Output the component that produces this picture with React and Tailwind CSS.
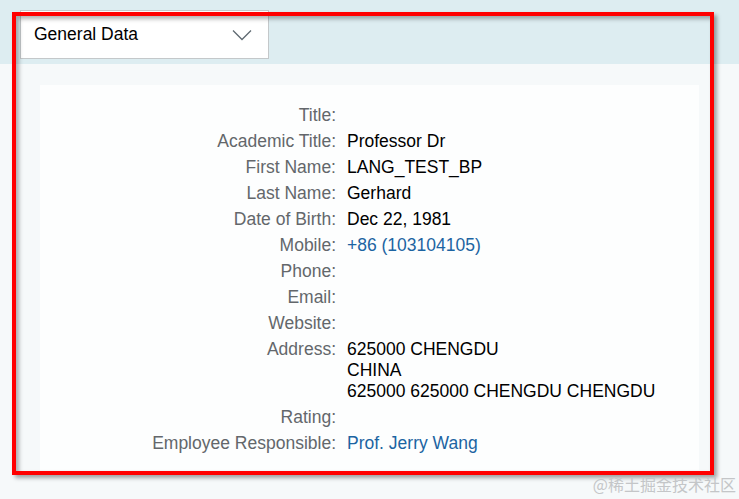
import React from "react";

const rows = [
  { label: "Title:", value: [] },
  { label: "Academic Title:", value: ["Professor Dr"] },
  { label: "First Name:", value: ["LANG_TEST_BP"] },
  { label: "Last Name:", value: ["Gerhard"] },
  { label: "Date of Birth:", value: ["Dec 22, 1981"] },
  { label: "Mobile:", value: ["+86 (103104105)"], link: true },
  { label: "Phone:", value: [] },
  { label: "Email:", value: [] },
  { label: "Website:", value: [] },
  {
    label: "Address:",
    value: ["625000 CHENGDU", "CHINA", "625000 625000 CHENGDU CHENGDU"],
  },
  { label: "Rating:", value: [] },
  { label: "Employee Responsible:", value: ["Prof. Jerry Wang"], link: true },
];

const App = () => {
  return (
    <div className="relative w-[739px] h-[499px] overflow-hidden bg-[#f6f9fa] font-['Liberation_Sans',Arial,sans-serif]">
      {/* header band with the section select */}
      <div className="h-[64px] bg-[#ddedf1] pl-[20px] pt-[10px]">
        <div className="w-[249px] h-[49px] bg-white border border-[#c4c8ca] flex items-center justify-between pl-[13px] pr-[16px]">
          <span className="text-[17.5px] text-black">General Data</span>
          <svg width="20" height="12" viewBox="0 0 20 12" fill="none">
            <path d="M1 1.5 L10 10.5 L19 1.5" stroke="#5f6a72" strokeWidth="1.3" />
          </svg>
        </div>
      </div>

      {/* form panel */}
      <div className="mx-[40px] mt-[21px] bg-[#fdfefe] pt-[20px] pb-[16px]">
        <div className="grid grid-cols-[296px_1fr] gap-x-[11px] gap-y-[5px] text-[17.5px] leading-[21px]">
          {rows.map((row, i) => (
            <React.Fragment key={i}>
              <div className="text-right text-[#63676b]">{row.label}</div>
              <div className={row.link ? "text-[#1c64a2]" : "text-black"}>
                {row.value.length === 0 ? (
                  <span>&nbsp;</span>
                ) : (
                  row.value.map((line, j) => <div key={j}>{line}</div>)
                )}
              </div>
            </React.Fragment>
          ))}
        </div>
      </div>

      {/* red highlight frame drawn over the screenshot */}
      <div className="absolute left-[12px] top-[12px] w-[702px] h-[463px] border-4 border-[#ff0000] pointer-events-none shadow-[3px_3px_4px_rgba(0,0,0,0.35),inset_3px_3px_4px_rgba(0,0,0,0.3)]"></div>

      <div className="absolute right-[3px] bottom-[3px] text-[16px] text-[#c4c6c8] font-['Noto_Sans_CJK_SC',sans-serif]">
        @稀土掘金技术社区
      </div>
    </div>
  );
};

export default App;
